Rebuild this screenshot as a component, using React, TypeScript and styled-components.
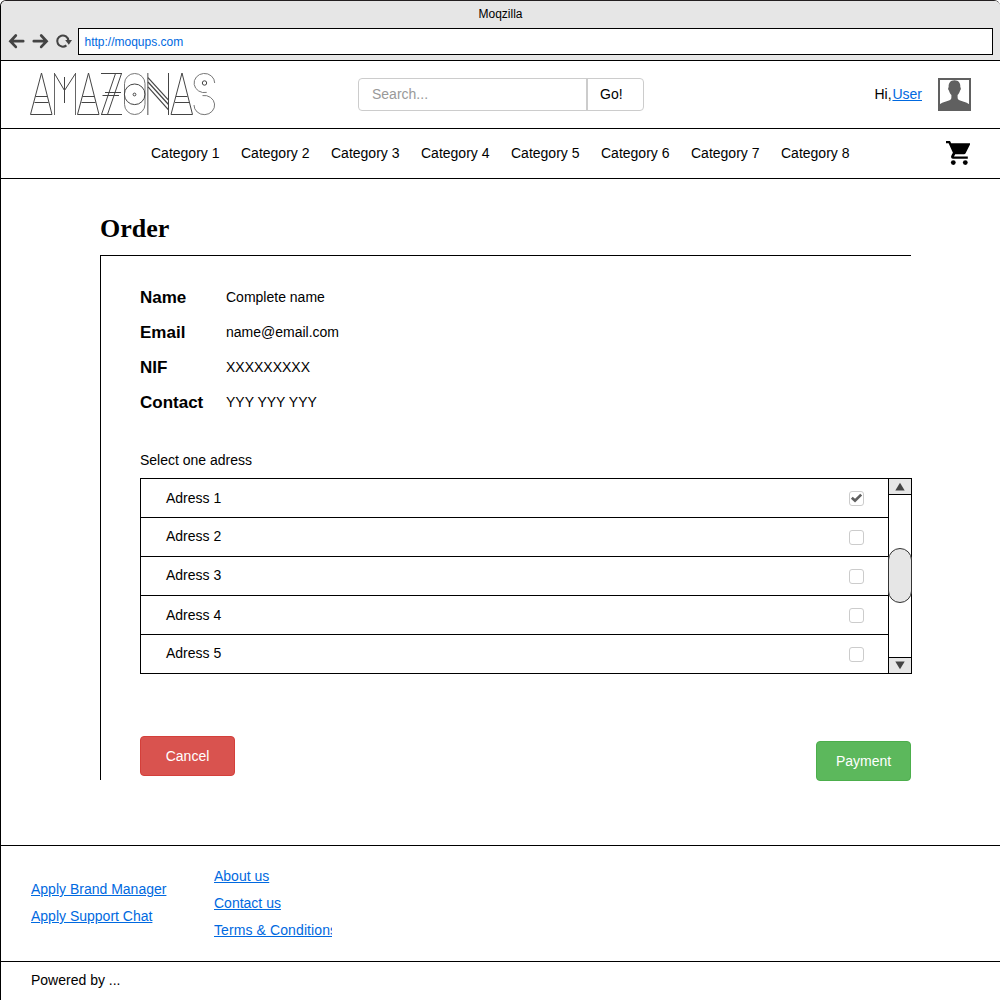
import React from "react";
import styled, { createGlobalStyle } from "styled-components";

const GlobalStyle = createGlobalStyle`
  * { box-sizing: border-box; }
  body { margin: 0; background: #fff; }
`;

const Window = styled.div`
  width: 1000px;
  height: 1000px;
  overflow: hidden;
  display: flex;
  flex-direction: column;
  border-left: 1px solid #000;
  border-top: 1px solid #231f20;
  border-top-left-radius: 6px;
  border-top-right-radius: 6px;
  background: #fff;
  color: #000;
  font: 14px/20px "Liberation Sans", Arial, sans-serif;
`;
const Chrome = styled.div`
  height: 60px;
  background: #e6e6e6;
  border-bottom: 1px solid #000;
  flex: none;
`;
const WindowTitle = styled.div`
  height: 27px;
  padding-top: 4px;
  font-size: 12px;
  line-height: 18px;
  text-align: center;
`;
const Toolbar = styled.div`
  display: flex;
  padding: 0 7px 0 7px;
`;
const Tools = styled.svg`
  width: 70px;
  height: 27px;
  flex: none;
`;
const AddressBar = styled.div`
  flex: 1;
  height: 27px;
  border: 1px solid #000;
  background: #fff;
  color: #0069e0;
  font-size: 12px;
  line-height: 26px;
  padding-left: 5.5px;
`;
const Header = styled.header`
  height: 68px;
  flex: none;
  display: flex;
  align-items: flex-start;
  border-bottom: 1px solid #000;
  padding: 0 29px;
`;
const Logo = styled.svg`
  width: 190px;
  height: 50px;
  margin: 9px 138px 0 0;
  fill: none;
  stroke: #444;
  stroke-width: 1;
`;
const Search = styled.div`
  display: flex;
  width: 286px;
  height: 33px;
  margin-top: 17px;
  border: 1px solid #ccc;
  border-radius: 4px;
  line-height: 30px;
`;
const SearchField = styled.div`
  width: 229px;
  padding-left: 13px;
  color: #999;
  border-right: 2px solid #ccc;
`;
const GoButton = styled.div`
  padding-left: 12px;
`;
const Account = styled.div`
  margin-left: auto;
  display: flex;
  padding-top: 17px;
  line-height: 32px;
`;
const Greeting = styled.span`
  width: 18px;
`;
const Link = styled.a<{ $tracking?: number }>`
  color: #0069e0;
  text-decoration: underline;
  white-space: nowrap;
  letter-spacing: ${(p) => p.$tracking ?? 0}px;
`;
const Avatar = styled.svg`
  width: 33px;
  height: 33px;
  margin-left: 16px;
`;
const Nav = styled.nav`
  height: 50px;
  flex: none;
  display: flex;
  border-bottom: 1px solid #000;
  padding: 0 27px 0 150px;
  line-height: 48px;
`;
const Category = styled.span`
  width: 90px;
`;
const Cart = styled.svg`
  width: 28px;
  height: 28px;
  margin: 10px 0 0 auto;
`;
const Main = styled.main`
  height: 666px;
  flex: none;
  padding: 35px 88px 0 99px;
`;
const Title = styled.h1`
  margin: 0 0 11px;
  font: bold 26px/30px "Liberation Serif", "Times New Roman", serif;
`;
const Panel = styled.section`
  width: 811px;
  height: 525px;
  border: solid #000;
  border-width: 1px 0 0 1px;
  padding: 24px 0 0 39px;
`;
const Details = styled.dl`
  margin: 0;
  display: grid;
  grid-template-columns: 86px 1fr;
  grid-auto-rows: 35px;
  line-height: 34px;
`;
const Label = styled.dt`
  font-size: 17px;
  font-weight: bold;
  line-height: 36px;
`;
const Value = styled.dd`
  margin: 0;
`;
const Prompt = styled.div`
  margin-top: 30px;
  height: 28px;
`;
const ListBox = styled.div`
  display: flex;
  width: 772px;
  height: 196px;
  border: 1px solid #000;
`;
const Rows = styled.div`
  flex: 1;
`;
const Row = styled.div<{ $lift: number }>`
  display: flex;
  justify-content: space-between;
  height: 39px;
  padding: 0 24px 0 25px;
  line-height: ${(p) => 38 - p.$lift * 2}px;
  border-bottom: 1px solid #000;
  &:last-child { border-bottom: 0; }
`;
const Check = styled.span`
  width: 15px;
  height: 15px;
  margin-top: 12px;
  border: 1px solid #ccc;
  border-radius: 3px;
  display: flex;
`;
const ScrollTrack = styled.div`
  width: 23px;
  border-left: 1px solid #000;
  display: flex;
  flex-direction: column;
`;
const Arrow = styled.div<{ $down?: boolean }>`
  height: 16px;
  margin-top: ${(p) => (p.$down ? "auto" : 0)};
  background: #e6e6e6;
  border: solid #000;
  border-width: ${(p) => (p.$down ? "1px 0 0" : "0 0 1px")};
  display: flex;
  justify-content: center;
  align-items: center;
  svg { width: 12px; height: 9px; fill: #444; }
`;
const Thumb = styled.div`
  height: 55px;
  width: 24px;
  margin: 53px -1px 0;
  border: 1px solid #333;
  border-radius: 12px;
  background: #e6e6e6;
`;
const Actions = styled.div`
  display: flex;
  justify-content: space-between;
  align-items: flex-start;
  margin-top: 62px;
`;
const Button = styled.button<{ $green?: boolean }>`
  width: 95px;
  height: 40px;
  padding: 0;
  margin-top: ${(p) => (p.$green ? 5 : 0)}px;
  color: #fff;
  font: inherit;
  border-radius: 4px;
  border: 1px solid ${(p) => (p.$green ? "#4cae4c" : "#d43f3a")};
  background: ${(p) => (p.$green ? "#5cb85c" : "#d9534f")};
`;
const Footer = styled.footer`
  height: 117px;
  flex: none;
  display: flex;
  border: solid #000;
  border-width: 1px 0;
  padding-left: 30px;
`;
const LinkColumn = styled.div<{ $top: number; $width: number }>`
  display: flex;
  flex-direction: column;
  align-items: flex-start;
  gap: 7px;
  width: ${(p) => p.$width}px;
  padding-top: ${(p) => p.$top}px;
  overflow: hidden;
`;
const Credits = styled.div`
  padding: 8px 30px;
`;

const LetterA = ({ x }: { x: number }) => (
  <>
    <polyline points={`${x},44.5 ${x + 11},3 ${x + 21.5},44.5`} />
    <line x1={x} y1="44.5" x2={x + 21.5} y2="44.5" />
    <line x1={x + 5} y1="26.5" x2={x + 16.5} y2="26.5" />
    <line x1={x + 4} y1="32.5" x2={x + 18} y2="32.5" />
  </>
);

const AmazonasLogo = () => (
  <Logo viewBox="0 0 190 50" aria-label="Amazonas">
    <LetterA x={0.5} />
    <g stroke="#666">
      <line x1="24.5" y1="3" x2="24.5" y2="45" />
      <line x1="45.5" y1="3" x2="45.5" y2="45" />
    </g>
    <polyline points="24.5,3.5 34.5,20.5 45.5,3.5" />
    <line x1="34.5" y1="7" x2="34.5" y2="33" />
    <LetterA x={47.5} />
    <line x1="71" y1="3.5" x2="92" y2="3.5" />
    <line x1="71" y1="44.5" x2="92" y2="44.5" />
    <line x1="85.5" y1="3.5" x2="71.5" y2="44.5" />
    <line x1="91.5" y1="3.5" x2="77.5" y2="44.5" />
    <line x1="75" y1="22.5" x2="91" y2="22.5" />
    <line x1="72.5" y1="25.5" x2="89" y2="25.5" />
    <rect x="94.5" y="3.5" width="20.5" height="41" rx="10.2" stroke="#777" />
    <circle cx="104.7" cy="24.3" r="10.3" />
    <circle cx="104.5" cy="24.5" r="1.4" />
    <line x1="117.8" y1="3" x2="117.8" y2="45" stroke="#777" strokeWidth="1.3" />
    <line x1="138.5" y1="3" x2="138.5" y2="45" />
    <g strokeWidth="1.2">
      <line x1="118" y1="7.7" x2="138.5" y2="30.2" />
      <line x1="118" y1="12" x2="138.5" y2="34.5" />
      <line x1="118" y1="16.8" x2="138.5" y2="39.8" />
    </g>
    <LetterA x={141} />
    <path
      d="M184.7 13A10.3 9.6 0 1 0 176.7 22.4M164 35A10.3 9.6 0 1 0 172.5 25.6"
      stroke="#777"
    />
    <circle cx="174.5" cy="13" r="2.2" />
  </Logo>
);

const categories = [1, 2, 3, 4, 5, 6, 7, 8];
const details = [
  ["Name", "Complete name"],
  ["Email", "name@email.com"],
  ["NIF", "XXXXXXXXX"],
  ["Contact", "YYY YYY YYY"],
];
const addresses = [
  { id: 1, lift: 0 },
  { id: 2, lift: 1 },
  { id: 3, lift: 1 },
  { id: 4, lift: 0 },
  { id: 5, lift: 1 },
];

export default function App() {
  return (
    <Window>
      <GlobalStyle />
      <Chrome>
        <WindowTitle>Moqzilla</WindowTitle>
        <Toolbar>
          <Tools viewBox="8 28 70 27" fill="none" stroke="#444" strokeWidth="2.7" strokeLinecap="round">
            <path d="M23.2 41.2H11M15.8 35.5L10.4 41.2L15.8 46.9" />
            <path d="M33.8 41.2H46M41.2 35.5L46.6 41.2L41.2 46.9" />
            <path d="M66.4 45.4A5.6 5.6 0 1 1 68.4 40.6" strokeWidth="2.1" strokeLinecap="butt" />
            <path d="M65.2 40.1H72L68.8 44.8Z" fill="#444" stroke="none" />
          </Tools>
          <AddressBar>http://moqups.com</AddressBar>
        </Toolbar>
      </Chrome>
      <Header>
        <AmazonasLogo />
        <Search>
          <SearchField>Search...</SearchField>
          <GoButton>Go!</GoButton>
        </Search>
        <Account>
          <Greeting>Hi,</Greeting>
          <Link>User</Link>
          <Avatar viewBox="0 0 33 33">
            <rect x="1" y="1" width="31" height="31" fill="#fff" stroke="#606060" strokeWidth="2" />
            <path
              fill="#606060"
              d="M1 32V27.2C3 24.5 8 23.8 11.5 22.3C13 21.6 13.4 20.8 13.4 19V17C12 15.6 11.3 14 11 12.5C10 12 9.8 9.6 10.7 9.2C10.2 5 12.5 2.2 16.5 2.2S22.8 5 22.3 9.2C23.2 9.6 23 12 22 12.5C21.7 14 21 15.6 19.6 17V19C19.6 20.8 20 21.6 21.5 22.3C25 23.8 30 24.5 32 27.2V32Z"
            />
          </Avatar>
        </Account>
      </Header>
      <Nav>
        {categories.map((n) => (
          <Category key={n}>Category {n}</Category>
        ))}
        <Cart viewBox="0 0 28 28">
          <path d="M1 2H5L6.2 4.3H25V5.6L20.6 14.2Q20.1 15.2 19 15.2H10.2L9 17.6H22.8V19.8H8.2C6 19.8 5.6 17.8 6.5 16.3L7.9 13.7L3.6 4.3H1Z" />
          <circle cx="8.3" cy="23.6" r="2.4" />
          <circle cx="20.3" cy="23.6" r="2.4" />
        </Cart>
      </Nav>
      <Main>
        <Title>Order</Title>
        <Panel>
          <Details>
            {details.map(([label, value]) => (
              <React.Fragment key={label}>
                <Label>{label}</Label>
                <Value>{value}</Value>
              </React.Fragment>
            ))}
          </Details>
          <Prompt>Select one adress</Prompt>
          <ListBox>
            <Rows>
              {addresses.map(({ id, lift }) => (
                <Row key={id} $lift={lift}>
                  Adress {id}
                  <Check>
                    {id === 1 && (
                      <svg width="13" height="13" viewBox="0 0 13 13">
                        <path d="M1.8 5.8L5 8.6L11.2 2.6" fill="none" stroke="#606060" strokeWidth="2.7" />
                      </svg>
                    )}
                  </Check>
                </Row>
              ))}
            </Rows>
            <ScrollTrack>
              <Arrow>
                <svg viewBox="0 0 12 9"><path d="M1.3 8.5L6 .7L10.7 8.5Z" /></svg>
              </Arrow>
              <Thumb />
              <Arrow $down>
                <svg viewBox="0 0 12 9"><path d="M1.3.5H10.7L6 8.3Z" /></svg>
              </Arrow>
            </ScrollTrack>
          </ListBox>
          <Actions>
            <Button>Cancel</Button>
            <Button $green>Payment</Button>
          </Actions>
        </Panel>
      </Main>
      <Footer>
        <LinkColumn $top={33} $width={183}>
          <Link>Apply Brand Manager</Link>
          <Link>Apply Support Chat</Link>
        </LinkColumn>
        <LinkColumn $top={20} $width={118}>
          <Link>About us</Link>
          <Link>Contact us</Link>
          <Link $tracking={0.1}>Terms &amp; Conditions</Link>
        </LinkColumn>
      </Footer>
      <Credits>Powered by ...</Credits>
    </Window>
  );
}
